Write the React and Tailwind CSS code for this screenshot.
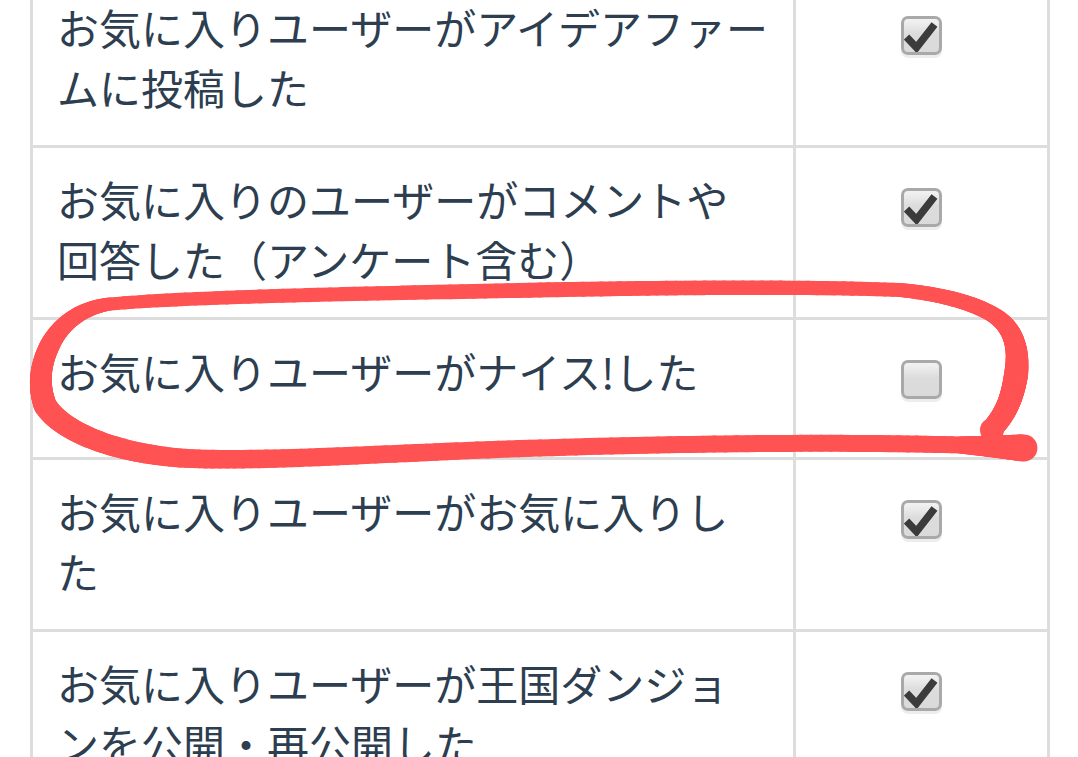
import React from 'react'

const ROWS = [
  { lines: ['お気に入りユーザーがアイデアファー', 'ムに投稿した'], checked: true },
  { lines: ['お気に入りのユーザーがコメントや', '回答した（アンケート含む）'], checked: true },
  { lines: ['お気に入りユーザーがナイス!した'], checked: false },
  { lines: ['お気に入りユーザーがお気に入りし', 'た'], checked: true },
  { lines: ['お気に入りユーザーが王国ダンジョ', 'ンを公開・再公開した'], checked: true },
]

function Checkbox({ checked }) {
  return (
    <div className="relative w-[41px] h-[39px] rounded-[7px] border-[3px] border-[#a9a9a9] bg-[linear-gradient(to_bottom,#f3f3f3,#dcdcdc_45%,#dadada)] shadow-[0_3px_0_#ededed]">
      {checked && (
        <svg className="absolute inset-0" width="35" height="33" viewBox="0 0 35 33">
          <path d="M2.5 18 L12.5 28.5 L30.5 5.5" fill="none" stroke="#3b3b3b" strokeWidth="7.5" strokeLinejoin="miter" />
        </svg>
      )}
    </div>
  )
}

// hand-drawn red loop: cubic pieces [p0, c1, c2, p1, widthStart, widthEnd]
const LOOP = [
  [[991, 430], [1005, 415], [1012, 400], [1016, 375], 21, 24],
  [[1016, 375], [1020, 345], [1012, 325], [990, 313], 24, 16],
  [[990, 313], [970, 302], [940, 294], [900, 290], 16, 14],
  [[900, 290], [800, 286], [650, 288], [540, 290], 14, 15],
  [[540, 290], [400, 293], [200, 296], [110, 304], 15, 13],
  [[110, 304], [80, 308], [60, 325], [50, 345], 13, 20],
  [[50, 345], [40, 365], [38, 385], [45, 405], 20, 23],
  [[45, 405], [60, 430], [110, 452], [180, 458], 23, 19],
  [[180, 458], [260, 463], [400, 452], [540, 448], 19, 17],
  [[540, 448], [700, 443], [850, 442], [960, 445], 17, 17],
  [[960, 445], [985, 446], [1005, 447], [1024, 448], 17, 27],
]

function bez(a, b, c, d, t) {
  const u = 1 - t
  return u * u * u * a + 3 * u * u * t * b + 3 * u * t * t * c + t * t * t * d
}

function Scribble() {
  const c = '#ff5252'
  const segs = []
  LOOP.forEach(([p0, c1, c2, p1, w0, w1], si) => {
    const n = 40
    let prev = p0
    for (let k = 1; k <= n; k++) {
      const t = k / n
      const pt = [bez(p0[0], c1[0], c2[0], p1[0], t), bez(p0[1], c1[1], c2[1], p1[1], t)]
      const w = w0 + (w1 - w0) * ((k - 0.5) / n)
      segs.push(<line key={`${si}-${k}`} x1={prev[0]} y1={prev[1]} x2={pt[0]} y2={pt[1]} strokeWidth={w} />)
      prev = pt
    }
  })
  return (
    <svg className="absolute inset-0 pointer-events-none" width="1078" height="757" viewBox="0 0 1078 757">
      <g stroke={c} strokeLinecap="round">{segs}</g>
      <circle cx="992" cy="430" r="12" fill={c} />
    </svg>
  )
}

export default function App() {
  return (
    <div className="relative w-[1078px] h-[757px] overflow-hidden bg-white" style={{ fontFamily: '"Noto Sans CJK JP", "Noto Sans", sans-serif' }}>
      <div className="ml-[30px] -mt-[24px] w-[1020px] border-x-[3px] border-[#dddddd]">
        {ROWS.map((row, i) => (
          <div key={i} className="flex border-b-[3px] border-[#dddddd]">
            <div className="w-[763px] shrink-0 border-r-[3px] border-[#dddddd] pl-[24px] pr-[10px] pt-[21px] pb-[28px] text-[42px] leading-[60px] text-[#2c3e50] whitespace-nowrap">
              {row.lines.map((l, j) => (
                <div key={j}>{l}</div>
              ))}
            </div>
            <div className="flex-1 flex justify-center pt-[40px] pb-[58px]">
              <Checkbox checked={row.checked} />
            </div>
          </div>
        ))}
      </div>
      <Scribble />
    </div>
  )
}
